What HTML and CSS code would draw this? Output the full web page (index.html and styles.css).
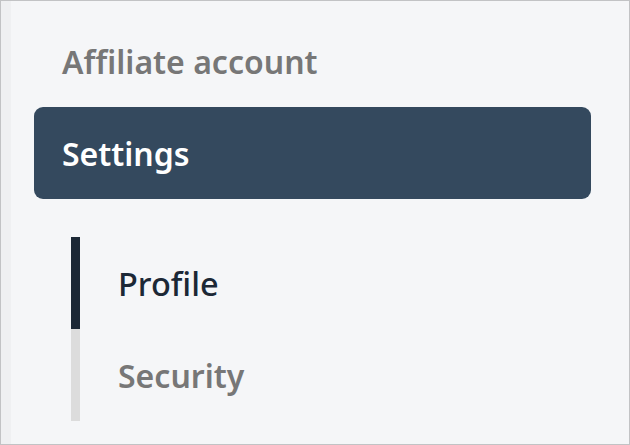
FILE: index.html
```html
<!DOCTYPE html>
<html>
<head>
<meta charset="utf-8">
<link rel="stylesheet" href="styles.css">
</head>
<body>
<div class="frame">
  <div class="edge"></div>
  <nav class="nav">
    <a class="item">Affiliate account</a>
    <a class="item active">Settings</a>
    <div class="sub">
      <a class="sub-item current">Profile</a>
      <a class="sub-item">Security</a>
    </div>
  </nav>
</div>
</body>
</html>
```
FILE: styles.css
```css
html, body {
  margin: 0;
  padding: 0;
}
body {
  width: 630px;
  height: 445px;
  font-family: "Noto Sans", "Open Sans", sans-serif;
}
.frame {
  box-sizing: border-box;
  width: 630px;
  height: 445px;
  border: 1px solid #c2c3c5;
  background: #f5f6f8;
  display: flex;
  overflow: hidden;
}
.edge {
  width: 10px;
  flex: none;
  background: #eff0f2;
}
.nav {
  display: flex;
  flex-direction: column;
  padding: 14px 0 0 23px;
  width: 557px;
}
.item {
  display: flex;
  align-items: center;
  height: 92px;
  padding-left: 28px;
  font-size: 32px;
  color: #777777;
  font-weight: 600;
  border-radius: 9px;
}
.item.active {
  background: #34495e;
  color: #ffffff;
  font-weight: 600;
}
.sub {
  display: flex;
  flex-direction: column;
  margin: 38px 0 0 37px;
}
.sub-item {
  display: flex;
  align-items: center;
  height: 92px;
  padding-left: 38px;
  border-left: 9px solid #dcdcdc;
  font-size: 32px;
  color: #777777;
  font-weight: 600;
}
.sub-item.current {
  border-left-color: #1c2836;
  color: #1c2836;
  font-weight: 500;
  font-size: 32.5px;
}
```
